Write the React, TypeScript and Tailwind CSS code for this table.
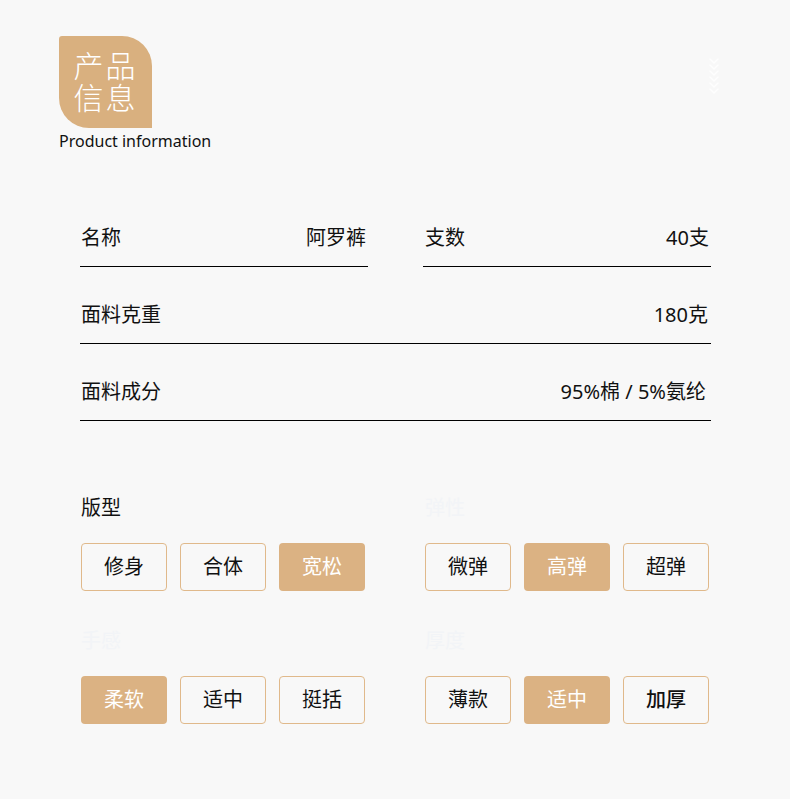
import React from "react";

const font = { fontFamily: '"Noto Sans", "Noto Sans CJK SC", sans-serif' };

const Chevrons = () => (
  <svg width="12" height="36" viewBox="0 0 12 36" fill="none">
    {[0, 6, 12, 18, 24, 30].map((y) => (
      <path
        key={y}
        d={`M2 ${y + 1} L6 ${y + 5} L10 ${y + 1}`}
        stroke="#ffffff"
        strokeWidth="1.6"
        strokeLinecap="round"
        strokeLinejoin="round"
      />
    ))}
  </svg>
);

const Row = ({ label, value, className = "" }: { label: string; value: string; className?: string }) => (
  <div className={`flex h-[77px] items-end justify-between border-b border-black pb-[14px] text-[20px] leading-[28px] text-[#111] ${className}`}>
    <span>{label}</span>
    <span>{value}</span>
  </div>
);

const Option = ({ text, active, bold }: { text: string; active?: boolean; bold?: boolean }) => (
  <div
    className={`flex h-[48px] w-[86px] shrink-0 items-center justify-center rounded-[4px] text-[20px] ${
      active ? "bg-[#dbb283] text-white" : "border border-[#e0b98b] text-[#111]"
    } ${bold ? "font-medium" : ""}`}
  >
    {text}
  </div>
);

const Group = ({ title, faint, options }: { title: string; faint?: boolean; options: { t: string; a?: boolean; b?: boolean }[] }) => (
  <div className="flex w-[287px] flex-col">
    <div className={`h-[28px] text-[20px] leading-[28px] ${faint ? "text-[#f2f4f7]" : "text-[#111]"}`}>{title}</div>
    <div className="mt-[21px] flex gap-[13px]">
      {options.map((o) => (
        <Option key={o.t} text={o.t} active={o.a} bold={o.b} />
      ))}
    </div>
  </div>
);

export default function App() {
  return (
    <div className="min-h-[799px] w-[790px] bg-[#f8f8f8]" style={font}>
      <div className="flex justify-between pl-[59px] pr-[70px] pt-[36px]">
        <div>
          <div className="flex h-[92px] w-[93px] items-center justify-center rounded-tl-[3px] rounded-tr-[30px] rounded-bl-[30px] bg-[#d9b07f] text-center text-[30px] font-light leading-[32px] tracking-[2px] text-white">
            <span>
              产品
              <br />
              信息
            </span>
          </div>
          <div className="mt-[3px] text-[16px] leading-[20px] text-[#111]">Product information</div>
        </div>
        <div className="pt-[22px] opacity-90">
          <Chevrons />
        </div>
      </div>

      <div className="mx-[80px] mt-[39px] w-[631px]">
        <div className="flex justify-between">
          <Row label="名称" value="阿罗裤" className="w-[288px] pl-[1px] pr-[2px]" />
          <Row label="支数" value="40支" className="w-[288px] pl-[2px] pr-[2px]" />
        </div>
        <Row label="面料克重" value="180克" className="pl-[1px] pr-[3px]" />
        <Row label="面料成分" value="95%棉 / 5%氨纶" className="pl-[1px] pr-[5px]" />
      </div>

      <div className="ml-[81px] mt-[73px] flex w-[631px] flex-col gap-[36px]">
        <div className="flex gap-[57px]">
          <Group title="版型" options={[{ t: "修身" }, { t: "合体" }, { t: "宽松", a: true }]} />
          <Group title="弹性" faint options={[{ t: "微弹" }, { t: "高弹", a: true }, { t: "超弹" }]} />
        </div>
        <div className="flex gap-[57px]">
          <Group title="手感" faint options={[{ t: "柔软", a: true }, { t: "适中" }, { t: "挺括" }]} />
          <Group title="厚度" faint options={[{ t: "薄款" }, { t: "适中", a: true }, { t: "加厚", b: true }]} />
        </div>
      </div>
    </div>
  );
}
